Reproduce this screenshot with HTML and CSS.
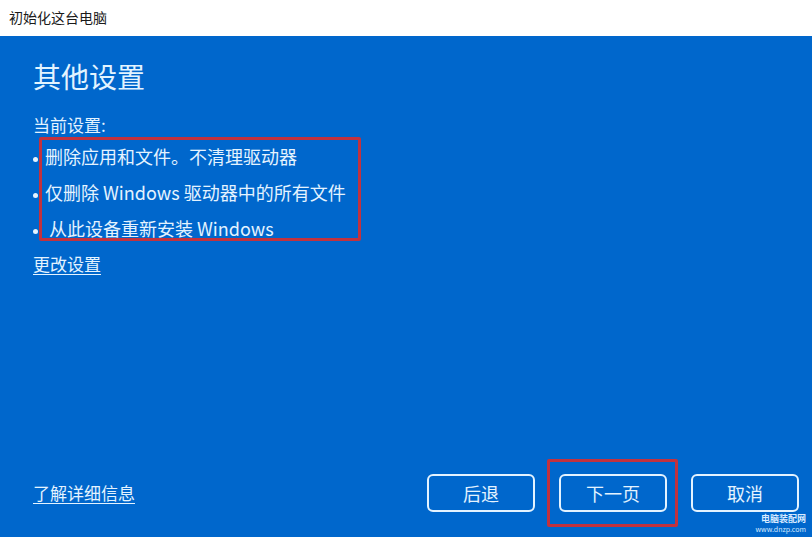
FILE: index.html
```html
<!DOCTYPE html>
<html lang="zh-CN">
  <head>
    <meta charset="UTF-8" />
    <meta name="viewport" content="width=device-width, initial-scale=1.0" />
    <title>初始化这台电脑</title>
    <link rel="stylesheet" href="styles.css">
  </head>
  <body>
    <div class="title-bar">初始化这台电脑</div>

    <div class="main">
      <div class="content">
        <h1>其他设置</h1>
        <div class="current-label">当前设置:</div>
        <ul class="current-list">
          <li><span class="dot"></span>删除应用和文件。不清理驱动器</li>
          <li><span class="dot"></span>仅删除 Windows 驱动器中的所有文件</li>
          <li><span class="dot"></span>&nbsp;从此设备重新安装 Windows</li>
        </ul>
        <a href="#" class="link">更改设置</a>
      </div>

      <div class="footer">
        <a href="#" class="link">了解详细信息</a>
        <div class="buttons">
          <button>后退</button>
          <button class="marked">下一页</button>
          <button>取消</button>
        </div>
      </div>

      <div class="watermark">
        <div class="wm-name">电脑装配网</div>
        <div class="wm-url">www.dnzp.com</div>
      </div>
    </div>
  </body>
</html>
```

FILE: styles.css
```css
body {
  font-family: "Noto Sans CJK SC", "Noto Sans", sans-serif;
  margin: 0;
  padding: 0;
  width: 812px;
  height: 537px;
  overflow: hidden;
  background-color: #0067cc;
}

.title-bar {
  height: 36px;
  line-height: 34px;
  padding-left: 9px;
  background-color: #fff;
  color: #1a1a1a;
  font-size: 14px;
}

.main {
  position: relative;
  height: 501px;
  display: flex;
  flex-direction: column;
  justify-content: space-between;
  padding: 0 13px 0 33px;
  color: #e4f3ff;
}

h1 {
  margin: 20px 0 16px 0;
  font-size: 28px;
  font-weight: normal;
  line-height: 40px;
  color: #e2f4ff;
}

.current-label {
  font-size: 17px;
  line-height: 26px;
}

.current-list {
  position: relative;
  list-style: none;
  margin: 0;
  padding: 0;
  font-size: 18px;
}

.current-list li {
  line-height: 36px;
}

.current-list .dot {
  display: inline-block;
  width: 5px;
  height: 5px;
  margin-right: 7px;
  border-radius: 50%;
  background-color: #e4f3ff;
  vertical-align: middle;
}

/* red annotation box round the list */
.current-list::after {
  content: "";
  position: absolute;
  top: -1px;
  left: 6px;
  width: 322px;
  bottom: 5px;
  border: 3px solid #c2323e;
  border-radius: 2px;
  box-sizing: border-box;
}

.link {
  display: inline-block;
  color: #e4f3ff;
  font-size: 17px;
  line-height: 36px;
  text-decoration: underline;
  text-underline-offset: 3px;
}

.footer {
  display: flex;
  justify-content: space-between;
  align-items: center;
  margin-bottom: 25px;
}

.buttons {
  display: flex;
  gap: 24px;
}

button {
  position: relative;
  width: 108px;
  height: 38px;
  padding: 0;
  font-family: inherit;
  font-size: 18px;
  color: #e4f3ff;
  background-color: #0067cc;
  border: 2px solid #e4f3ff;
  border-radius: 6px;
}

.marked::after {
  content: "";
  position: absolute;
  top: -17px;
  left: -14px;
  right: -13px;
  bottom: -17px;
  border: 3px solid #c2323e;
  border-radius: 2px;
}

.watermark {
  position: absolute;
  right: 6px;
  bottom: 3px;
  text-align: right;
  color: #d8ebff;
}

.wm-name {
  font-size: 9px;
  line-height: 11px;
  font-weight: bold;
}

.wm-url {
  font-size: 7px;
  line-height: 10px;
}
```
